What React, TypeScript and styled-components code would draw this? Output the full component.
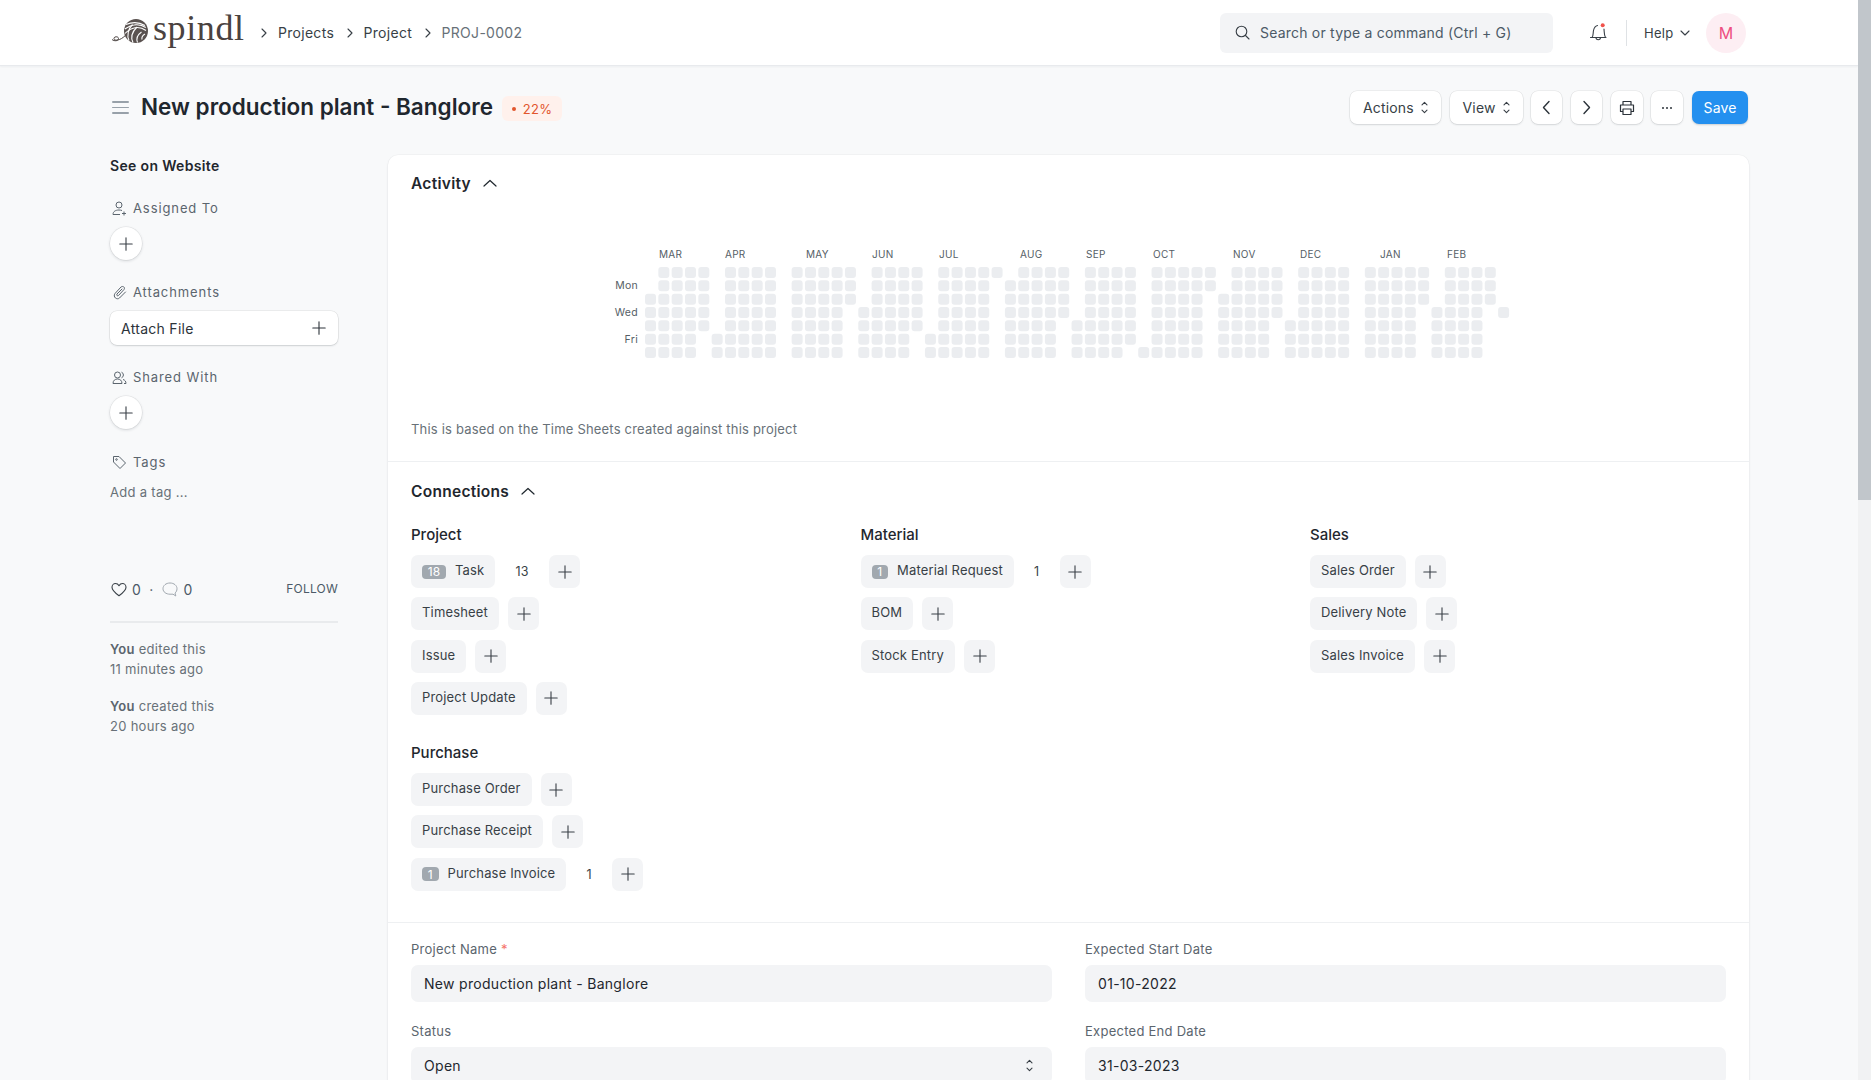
import React from "react";
import styled, { createGlobalStyle } from "styled-components";

const GlobalStyle = createGlobalStyle`
  html, body {
    margin: 0;
    height: 100%;
    overflow: hidden;
    background: #f8f9fa;
  }
  body {
    font-family: Inter, "Liberation Sans", sans-serif;
    color: #1f272e;
    letter-spacing: 0.018em;
    -webkit-font-smoothing: antialiased;
  }
  * {
    box-sizing: border-box;
  }
`;

const Shell = styled.div`
  display: flex;
  height: 1080px;
  overflow: hidden;
`;

const Page = styled.div`
  width: 1858px;
  flex: none;
`;

const ScrollTrack = styled.div`
  width: 13px;
  flex: none;
  background: #f1f2f3;
`;

const ScrollThumb = styled.div`
  height: 500px;
  background: #c1c6cb;
`;

const Navbar = styled.header`
  height: 66px;
  background: #fff;
  border-bottom: 1px solid #e8eaed;
  box-shadow: 0 1px 2px rgba(25, 39, 52, 0.05);
  display: flex;
  align-items: center;
  padding: 0 112px 0 111px;
`;

const LogoLink = styled.div`
  display: flex;
  align-items: center;
  width: 133px;
  height: 40px;
  flex: none;

  svg {
    flex: none;
  }
`;

const LogoText = styled.span`
  font-family: "Liberation Serif", serif;
  font-size: 36px;
  line-height: 40px;
  letter-spacing: 0.6px;
  color: #4a4240;
  margin-left: 3px;
  margin-top: -9px;
`;

const Crumbs = styled.nav`
  display: flex;
  align-items: center;
  margin-left: 17px;
  font-size: 14px;
  color: #383f46;
  flex: 1;
`;

const Crumb = styled.span<{ $muted?: boolean }>`
  color: ${(p) => (p.$muted ? "#687178" : "#383f46")};
  margin: 0 12.5px 0 11px;
`;

const SearchBox = styled.div`
  width: 333px;
  height: 40px;
  border-radius: 6px;
  background: #f3f4f6;
  display: flex;
  align-items: center;
  padding: 0 15px;
  gap: 10px;
  font-size: 14px;
  letter-spacing: 0.015em;
  color: #4c5a67;
  flex: none;
`;

const BellWrap = styled.div`
  width: 18px;
  height: 20px;
  margin-left: 36px;
  flex: none;
`;

const NavDivider = styled.div`
  width: 1px;
  height: 26px;
  background: #dfe2e5;
  margin: 0 17px 0 19px;
  flex: none;
`;

const HelpMenu = styled.div`
  display: flex;
  align-items: center;
  gap: 6px;
  font-size: 13px;
  color: #383f46;
  width: 62px;
  flex: none;
`;

const Avatar = styled.div`
  width: 40px;
  height: 40px;
  border-radius: 50%;
  background: #fdeef3;
  color: #ed4f82;
  font-size: 16px;
  display: flex;
  align-items: center;
  justify-content: center;
  flex: none;
`;

const Container = styled.div`
  padding: 0 110px;
`;

const PageHead = styled.div`
  display: flex;
  align-items: center;
  height: 89px;
  padding-bottom: 8px;
`;

const Hamburger = styled.div`
  width: 17px;
  height: 13px;
  margin: 2px 12px 0 2px;
  flex: none;
  display: flex;
  flex-direction: column;
  justify-content: space-between;

  span {
    display: block;
    height: 1.6px;
    background: #98a1a9;
    border-radius: 1px;
  }
`;

const Title = styled.h1`
  font-size: 22.5px;
  font-weight: 600;
  margin: 0;
  color: #1f272e;
  line-height: 30px;
  letter-spacing: 0;
`;

const Percent = styled.div`
  margin: 4px 0 0 9px;
  height: 25px;
  width: 60px;
  background: #fff1ec;
  border-radius: 6px;
  color: #e2562d;
  font-size: 13px;
  display: flex;
  align-items: center;
  justify-content: center;
  gap: 7px;
`;

const Dot = styled.span`
  width: 4px;
  height: 4px;
  border-radius: 50%;
  background: #e2562d;
`;

const Actions = styled.div`
  margin-left: auto;
  display: flex;
  gap: 8.7px;
  margin-top: 2px;
`;

const ActionButton = styled.button<{ $w: number; $primary?: boolean }>`
  width: ${(p) => p.$w}px;
  height: 33px;
  border: 0;
  border-radius: 7px;
  padding: 0;
  background: ${(p) => (p.$primary ? "#2490ef" : "#fff")};
  color: ${(p) => (p.$primary ? "#fff" : "#383f46")};
  box-shadow: ${(p) =>
    p.$primary
      ? "0 1px 2px rgba(25,39,52,0.2)"
      : "0 0 0 0.5px rgba(0,0,0,0.09), 0 1px 2px rgba(25,39,52,0.12)"};
  font-family: inherit;
  font-size: 14px;
  letter-spacing: 0.01em;
  display: flex;
  align-items: center;
  justify-content: center;
  gap: 7px;
`;

const Layout = styled.div`
  display: flex;
  gap: 50px;
`;

const Sidebar = styled.aside`
  width: 228px;
  flex: none;
`;

const WebsiteLink = styled.div`
  font-size: 14px;
  font-weight: 600;
  line-height: 20px;
  letter-spacing: 0.34px;
  color: #1f272e;
  margin-top: 1px;
`;

const SideLabel = styled.div`
  display: flex;
  align-items: center;
  gap: 6px;
  height: 20px;
  font-size: 13px;
  color: #5b656e;
  letter-spacing: 0.9px;
  padding-left: 2px;
`;

const SideBlock = styled.div<{ $top: number }>`
  margin-top: ${(p) => p.$top}px;
`;

const CircleButton = styled.div`
  width: 32px;
  height: 33px;
  border-radius: 50%;
  background: #fff;
  box-shadow: 0 0 0 0.5px rgba(0,0,0,0.08), 0 1px 3px rgba(25,39,52,0.16);
  display: flex;
  align-items: center;
  justify-content: center;
  margin-top: 9px;
  color: #383f46;
`;

const AttachButton = styled.div`
  height: 34px;
  width: 228px;
  border-radius: 7px;
  background: #fff;
  box-shadow: 0 0 0 0.5px rgba(0,0,0,0.1), 0 1px 2px rgba(25,39,52,0.14);
  display: flex;
  align-items: center;
  justify-content: space-between;
  padding: 0 11px;
  margin-top: 9px;
  font-size: 14px;
  color: #2c333a;
`;

const TagHint = styled.div`
  font-size: 13px;
  line-height: 20px;
  color: #687178;
  margin-top: 10px;
  letter-spacing: 0.3px;
`;

const StatsRow = styled.div`
  display: flex;
  align-items: center;
  height: 20px;
  margin-top: 77px;
  font-size: 14px;
  color: #4c5a67;
  padding-left: 1px;
`;

const StatCount = styled.span`
  margin: 0 8px 0 5px;
`;

const StatSep = styled.span`
  margin-right: 9px;
`;

const Follow = styled.span`
  margin: -1px 0 0 auto;
  font-size: 12px;
  letter-spacing: 0.2px;
  color: #4c5a67;
`;

const SideRule = styled.hr`
  border: 0;
  height: 2px;
  background: #e9ebed;
  margin: 22px 0 16px;
`;

const LogLine = styled.div`
  font-size: 13px;
  line-height: 20px;
  color: #687178;
  margin-bottom: 17px;

  b {
    font-weight: 600;
    color: #5b656e;
  }
`;

const Card = styled.main`
  width: 1361px;
  height: 950px;
  background: #fff;
  border-radius: 10px;
  box-shadow: 0 0 0 0.5px rgba(0,0,0,0.04), 0 1px 3px rgba(25,39,52,0.06);
  flex: none;
`;

const Section = styled.section<{ $pad: string; $h: number; $last?: boolean }>`
  padding: ${(p) => p.$pad};
  height: ${(p) => p.$h}px;
  border-bottom: ${(p) => (p.$last ? "0" : "1px solid #eef0f2")};
`;

const SectionHead = styled.div`
  display: flex;
  align-items: center;
  gap: 12px;
  font-size: 15.5px;
  font-weight: 600;
  color: #1f272e;
  height: 20px;
`;

const ChartWrap = styled.div`
  margin: 50px 0 0 90px;
  height: 130px;
`;

const ChartNote = styled.p`
  margin: 46px 0 0;
  font-size: 13px;
  line-height: 20px;
  letter-spacing: 0.015em;
  color: #687178;
`;

const LinksGrid = styled.div`
  display: grid;
  grid-template-columns: repeat(3, 449.5px);
  row-gap: 18px;
  margin-top: 23px;
`;

const LinkGroup = styled.div`
  display: flex;
  flex-direction: column;
  align-items: flex-start;
`;

const GroupTitle = styled.div`
  font-size: 15px;
  font-weight: 500;
  line-height: 22px;
  letter-spacing: 0;
  color: #1f272e;
  margin-bottom: 9px;
`;

const LinkRow = styled.div`
  display: flex;
  align-items: center;
  height: 33px;
  margin-bottom: 9.3px;
`;

const LinkChip = styled.div`
  height: 33px;
  padding: 0 11px 3px;
  background: #f3f4f6;
  border-radius: 7px;
  display: flex;
  align-items: center;
  gap: 9px;
  font-size: 13px;
  letter-spacing: 0.013em;
  color: #383f46;
`;

const CountBadge = styled.span<{ $wide?: boolean }>`
  width: ${(p) => (p.$wide ? 24 : 16.5)}px;
  height: 14px;
  border-radius: 4px;
  background: #a1a8af;
  color: #fff;
  font-size: 12px;
  display: flex;
  align-items: center;
  justify-content: center;
  margin-top: 3px;
`;

const LinkCount = styled.span<{ $w: number }>`
  width: ${(p) => p.$w}px;
  padding-left: 20px;
  font-size: 12.5px;
  color: #383f46;
  flex: none;
`;

const PlusChip = styled.div`
  width: 31px;
  height: 33px;
  margin-left: 9px;
  background: #f3f4f6;
  border-radius: 7px;
  display: flex;
  align-items: center;
  justify-content: center;
  color: #383f46;
`;

const FormGrid = styled.div`
  display: grid;
  grid-template-columns: 641px 641px;
  column-gap: 33px;
  row-gap: 19px;
`;

const Field = styled.div`
  display: flex;
  flex-direction: column;
`;

const FieldLabel = styled.label`
  font-size: 13px;
  line-height: 20px;
  letter-spacing: 0.02em;
  color: #5b656e;
  margin-bottom: 6px;

  i {
    color: #f5736b;
    font-style: normal;
  }
`;

const FieldBox = styled.div`
  height: 37px;
  background: #f3f4f6;
  border-radius: 7px;
  display: flex;
  align-items: center;
  justify-content: space-between;
  padding: 0 13px;
  font-size: 14px;
  letter-spacing: 0.3px;
  color: #1f272e;
`;

const SelectArrow = styled.span`
  display: flex;
  margin-right: 6px;
  color: #383f46;
`;

type SvgProps = { size?: number };

const Plus = ({ size = 16 }: SvgProps) => (
  <svg width={size} height={size} viewBox="0 0 16 16" fill="none" stroke="currentColor" strokeWidth="1.1" strokeLinecap="round">
    <path d="M8 1.8v12.4M1.8 8h12.4" />
  </svg>
);

const Updown = () => (
  <svg width="7" height="13" viewBox="0 0 7 13" fill="none" stroke="currentColor" strokeWidth="1.1" strokeLinecap="round" strokeLinejoin="round">
    <path d="M1 3.8 3.5 1.300 6 3.800M1 9.200 3.500 11.700 6 9.200" />
  </svg>
);

const Chevron = ({ dir }: { dir: "up" | "left" | "right" }) => {
  if (dir === "up") {
    return (
      <svg width="14" height="9" viewBox="0 0 14 9" fill="none" stroke="currentColor" strokeWidth="1.2" strokeLinecap="round" strokeLinejoin="round">
        <path d="M1 7l6-5.500L13 7" />
      </svg>
    );
  }
  return (
    <svg width="13" height="15" viewBox="0 0 13 15" fill="none" stroke="#2c333a" strokeWidth="1.4" strokeLinecap="round" strokeLinejoin="round">
      <path d={dir === "left" ? "M9 1.500 3.500 7.500 9 13.500" : "M4 1.500 9.500 7.500 4 13.500"} />
    </svg>
  );
};

const CrumbArrow = () => (
  <svg width="6" height="10" viewBox="0 0 6 10" fill="none" stroke="#383f46" strokeWidth="1.1" strokeLinecap="round" strokeLinejoin="round">
    <path d="M1 1l4 4-4 4" />
  </svg>
);

const YarnLogo = () => (
  <svg width="39" height="28" viewBox="0 0 39 28" fill="none" stroke="#4a4240">
    <path d="M1 20.500c2.500 2 6.500 1.500 6.500-1 0-2.500-5-2.200-4.500.3.500 2.200 6 2 11-3" strokeWidth="1" />
    <circle cx="25" cy="12" r="12" fill="#5a5250" stroke="none" />
    <g stroke="#fff" strokeWidth="1.100">
      <path d="M15 5.500c6-2.500 13-2.500 19 1M13.800 10c7-5 15-5.500 21-1.500M14 14.500c6-6.500 14-8 21-3" />
      <path d="M18 21.500c-2.500-5-.5-12 3.500-16M22 23.500c-2.500-5-.5-11 4-15.500M26.500 23.500c-1.500-4 .5-8 4-10.500M31 20.500c-.5-2 .5-4 3-5.500" />
    </g>
  </svg>
);

const Bell = () => (
  <svg width="18" height="20" viewBox="0 0 18 20" fill="none" stroke="#383f46" strokeWidth="1.100" strokeLinecap="round" strokeLinejoin="round">
    <path d="M1.500 14.500H17M3 14.500c1.500-2 1-4.500 1.500-7 .5-2.500 2-4.500 4-5M15 6c.3 3 0 6 1.500 8.500" />
    <path d="M7 14.500c0 3 4.500 3 4.500 0" />
    <circle cx="13.700" cy="2.200" r="2" fill="#f0524b" stroke="none" />
  </svg>
);

const SearchIcon = () => (
  <svg width="15" height="15" viewBox="0 0 15 15" fill="none" stroke="#383f46" strokeWidth="1.1" strokeLinecap="round">
    <circle cx="6.500" cy="6.500" r="5.300" />
    <path d="M10.500 10.500 14 14" />
  </svg>
);

const PrintIcon = () => (
  <svg width="16" height="16" viewBox="0 0 16 16" fill="none" stroke="#2c333a" strokeWidth="1.2" strokeLinejoin="round">
    <path d="M4 5V1.500h8V5M4 11.500H1.500V5h13v6.500H12" />
    <path d="M4 9h8v5.500H4z" />
  </svg>
);

const DotsIcon = () => (
  <svg width="14" height="4" viewBox="0 0 14 4" fill="#2c333a">
    <circle cx="3" cy="2" r="1" />
    <circle cx="7" cy="2" r="1" />
    <circle cx="11" cy="2" r="1" />
  </svg>
);

const AssignIcon = () => (
  <svg width="15" height="15" viewBox="0 0 15 15" fill="none" stroke="#5b656e" strokeWidth="1">
    <circle cx="7" cy="4" r="3" />
    <path d="M1 13.500c0-3 2.500-4.500 6-4.500 1 0 2 .2 3 .5M1 13.500h7M12 10.500v4M10 12.500h4" />
  </svg>
);

const ClipIcon = () => (
  <svg width="15" height="15" viewBox="0 0 15 15" fill="none" stroke="#5b656e" strokeWidth="1" strokeLinecap="round">
    <path d="M13.500 7 7.500 13c-2.500 2.300-7-1-4.500-4.500l6-6.500c2-1.500 4.500.5 3 2.500L6.500 10.500c-1 1-2.300-.3-1.500-1.500L10 4" />
  </svg>
);

const ShareIcon = () => (
  <svg width="15" height="15" viewBox="0 0 15 15" fill="none" stroke="#5b656e" strokeWidth="1">
    <circle cx="5.500" cy="5" r="3" />
    <path d="M1 13.500c0-3 2-4.500 4.500-4.500S10 10.500 10 13.500zM9.500 2.200a3 3 0 0 1 0 5.600M11 9.500c2 .5 3 2 3 4h-2" />
  </svg>
);

const TagIcon = () => (
  <svg width="15" height="15" viewBox="0 0 15 15" fill="none" stroke="#5b656e" strokeWidth="1" strokeLinejoin="round">
    <path d="M1.500 1.500h5.500l6.500 6.500-5.500 5.500L1.500 7z" />
    <circle cx="4.500" cy="4.500" r=".8" />
  </svg>
);

const Heart = () => (
  <svg width="16" height="15" viewBox="0 0 16 15" fill="none" stroke="#383f46" strokeWidth="1.1" strokeLinejoin="round">
    <path d="M8 13.800C3 10 1 8 1 5.200 1 3 2.700 1.500 4.500 1.500c1.500 0 2.700.8 3.500 2.200.8-1.400 2-2.200 3.500-2.200C13.300 1.500 15 3 15 5.200c0 2.800-2 4.800-7 8.600z" />
  </svg>
);

const Bubble = () => (
  <svg width="16" height="15" viewBox="0 0 16 15" fill="none" stroke="#a1a8af" strokeWidth="1" strokeLinejoin="round">
    <path d="M8 1C4 1 1 3.500 1 6.700s3 5.500 7 5.500h3l2.800 1.800-.8-3C14.300 10 15 8.500 15 6.700 15 3.500 12 1 8 1z" />
  </svg>
);

// [first row, last row] of filled cells per week column, null is the gap between months
const WEEKS: ([number, number] | null)[] = [
  [2, 6], [0, 6], [0, 6], [0, 6], [0, 4],
  [5, 6], [0, 6], [0, 6], [0, 6], [0, 6],
  null, [0, 6], [0, 6], [0, 6], [0, 6], [0, 2],
  [3, 6], [0, 6], [0, 6], [0, 6], [0, 4],
  [5, 6], [0, 6], [0, 6], [0, 6], [0, 6], [0, 0],
  [1, 6], [0, 6], [0, 6], [0, 6], [0, 3],
  [4, 6], [0, 6], [0, 6], [0, 6], [0, 5],
  [6, 6], [0, 6], [0, 6], [0, 6], [0, 6], [0, 1],
  [2, 6], [0, 6], [0, 6], [0, 6], [0, 3],
  [4, 6], [0, 6], [0, 6], [0, 6], [0, 6],
  null, [0, 6], [0, 6], [0, 6], [0, 6], [0, 2],
  [3, 6], [0, 6], [0, 6], [0, 6], [0, 2],
  [3, 3],
];

const MONTHS: [string, number][] = [
  ["MAR", 659], ["APR", 725], ["MAY", 806], ["JUN", 872], ["JUL", 939], ["AUG", 1020],
  ["SEP", 1086], ["OCT", 1153], ["NOV", 1233], ["DEC", 1300], ["JAN", 1380], ["FEB", 1447],
];

const DAYS: [string, number][] = [["Mon", 1], ["Wed", 3], ["Fri", 5]];

// chart origin on the page, the svg sits in flow at this spot
const ORIGIN_X = 501;
const ORIGIN_Y = 243;

const Heatmap = () => (
  <svg width="1060" height="130" viewBox="0 0 1060 130" fontFamily="Inter, sans-serif">
    {MONTHS.map(([m, x]) => (
      <text key={m} x={x - ORIGIN_X} y={15} fontSize="10" fill="#555e66">{m}</text>
    ))}
    {DAYS.map(([d, r]) => (
      <text key={d} x={638 - ORIGIN_X} y={33 + r * 13.33} fontSize="10.5" textAnchor="end" fill="#555e66">{d}</text>
    ))}
    {WEEKS.map((w, c) => {
      if (!w) return null;
      const cells = [];
      for (let r = w[0]; r <= w[1]; r++) {
        cells.push(
          <rect key={r} x={645 + c * 13.33 - ORIGIN_X} y={267 + r * 13.33 - ORIGIN_Y} width="11" height="11" rx="3" fill="#ebedf0" />
        );
      }
      return <g key={c}>{cells}</g>;
    })}
  </svg>
);

type LinkItem = { name: string; badge?: string; count?: string };

const LinkList = ({ title, items }: { title: string; items: LinkItem[] }) => (
  <LinkGroup>
    <GroupTitle>{title}</GroupTitle>
    {items.map((it) => (
      <LinkRow key={it.name}>
        <LinkChip>
          {it.badge && <CountBadge $wide={it.badge.length > 1}>{it.badge}</CountBadge>}
          {it.name}
        </LinkChip>
        {it.count && <LinkCount $w={it.count.length > 1 ? 45 : 37}>{it.count}</LinkCount>}
        <PlusChip>
          <Plus />
        </PlusChip>
      </LinkRow>
    ))}
  </LinkGroup>
);

const App = () => (
  <Shell>
    <GlobalStyle />
    <Page>
      <Navbar>
        <LogoLink>
          <YarnLogo />
          <LogoText>spindl</LogoText>
        </LogoLink>
        <Crumbs>
          <CrumbArrow />
          <Crumb>Projects</Crumb>
          <CrumbArrow />
          <Crumb>Project</Crumb>
          <CrumbArrow />
          <Crumb $muted>PROJ-0002</Crumb>
        </Crumbs>
        <SearchBox>
          <SearchIcon />
          Search or type a command (Ctrl + G)
        </SearchBox>
        <BellWrap>
          <Bell />
        </BellWrap>
        <NavDivider />
        <HelpMenu>
          Help
          <svg width="10" height="6" viewBox="0 0 10 6" fill="none" stroke="#383f46" strokeWidth="1.1" strokeLinecap="round" strokeLinejoin="round">
            <path d="M1 1l4 4 4-4" />
          </svg>
        </HelpMenu>
        <Avatar>M</Avatar>
      </Navbar>
      <Container>
        <PageHead>
          <Hamburger>
            <span />
            <span />
            <span />
          </Hamburger>
          <Title>New production plant - Banglore</Title>
          <Percent>
            <Dot />
            22%
          </Percent>
          <Actions>
            <ActionButton $w={91}>
              Actions <Updown />
            </ActionButton>
            <ActionButton $w={73}>
              View <Updown />
            </ActionButton>
            <ActionButton $w={31}>
              <Chevron dir="left" />
            </ActionButton>
            <ActionButton $w={31}>
              <Chevron dir="right" />
            </ActionButton>
            <ActionButton $w={32}>
              <PrintIcon />
            </ActionButton>
            <ActionButton $w={32}>
              <DotsIcon />
            </ActionButton>
            <ActionButton $w={56} $primary>Save</ActionButton>
          </Actions>
        </PageHead>
        <Layout>
          <Sidebar>
            <WebsiteLink>See on Website</WebsiteLink>
            <SideBlock $top={22}>
              <SideLabel>
                <AssignIcon />
                Assigned To
              </SideLabel>
              <CircleButton>
                <Plus />
              </CircleButton>
            </SideBlock>
            <SideBlock $top={22}>
              <SideLabel>
                <ClipIcon />
                Attachments
              </SideLabel>
              <AttachButton>
                Attach File
                <Plus />
              </AttachButton>
            </SideBlock>
            <SideBlock $top={22}>
              <SideLabel>
                <ShareIcon />
                Shared With
              </SideLabel>
              <CircleButton>
                <Plus />
              </CircleButton>
            </SideBlock>
            <SideBlock $top={23}>
              <SideLabel>
                <TagIcon />
                Tags
              </SideLabel>
              <TagHint>Add a tag ...</TagHint>
            </SideBlock>
            <StatsRow>
              <Heart />
              <StatCount>0</StatCount>
              <StatSep>·</StatSep>
              <Bubble />
              <StatCount>0</StatCount>
              <Follow>FOLLOW</Follow>
            </StatsRow>
            <SideRule />
            <LogLine>
              <b>You</b> edited this
              <br />
              11 minutes ago
            </LogLine>
            <LogLine>
              <b>You</b> created this
              <br />
              20 hours ago
            </LogLine>
          </Sidebar>
          <Card>
            <Section $pad="18px 23px 0" $h={307}>
              <SectionHead>
                Activity
                <Chevron dir="up" />
              </SectionHead>
              <ChartWrap>
                <Heatmap />
              </ChartWrap>
              <ChartNote>This is based on the Time Sheets created against this project</ChartNote>
            </Section>
            <Section $pad="19px 23px 0" $h={461}>
              <SectionHead>
                Connections
                <Chevron dir="up" />
              </SectionHead>
              <LinksGrid>
                <LinkList
                  title="Project"
                  items={[
                    { name: "Task", badge: "18", count: "13" },
                    { name: "Timesheet" },
                    { name: "Issue" },
                    { name: "Project Update" },
                  ]}
                />
                <LinkList
                  title="Material"
                  items={[
                    { name: "Material Request", badge: "1", count: "1" },
                    { name: "BOM" },
                    { name: "Stock Entry" },
                  ]}
                />
                <LinkList
                  title="Sales"
                  items={[
                    { name: "Sales Order" },
                    { name: "Delivery Note" },
                    { name: "Sales Invoice" },
                  ]}
                />
                <LinkList
                  title="Purchase"
                  items={[
                    { name: "Purchase Order" },
                    { name: "Purchase Receipt" },
                    { name: "Purchase Invoice", badge: "1", count: "1" },
                  ]}
                />
              </LinksGrid>
            </Section>
            <Section $pad="16px 23px 0" $h={180} $last>
              <FormGrid>
                <Field>
                  <FieldLabel>
                    Project Name <i>*</i>
                  </FieldLabel>
                  <FieldBox>New production plant - Banglore</FieldBox>
                </Field>
                <Field>
                  <FieldLabel>Expected Start Date</FieldLabel>
                  <FieldBox>01-10-2022</FieldBox>
                </Field>
                <Field>
                  <FieldLabel>Status</FieldLabel>
                  <FieldBox>
                    Open
                    <SelectArrow>
                      <Updown />
                    </SelectArrow>
                  </FieldBox>
                </Field>
                <Field>
                  <FieldLabel>Expected End Date</FieldLabel>
                  <FieldBox>31-03-2023</FieldBox>
                </Field>
              </FormGrid>
            </Section>
          </Card>
        </Layout>
      </Container>
    </Page>
    <ScrollTrack>
      <ScrollThumb />
    </ScrollTrack>
  </Shell>
);

export default App;
